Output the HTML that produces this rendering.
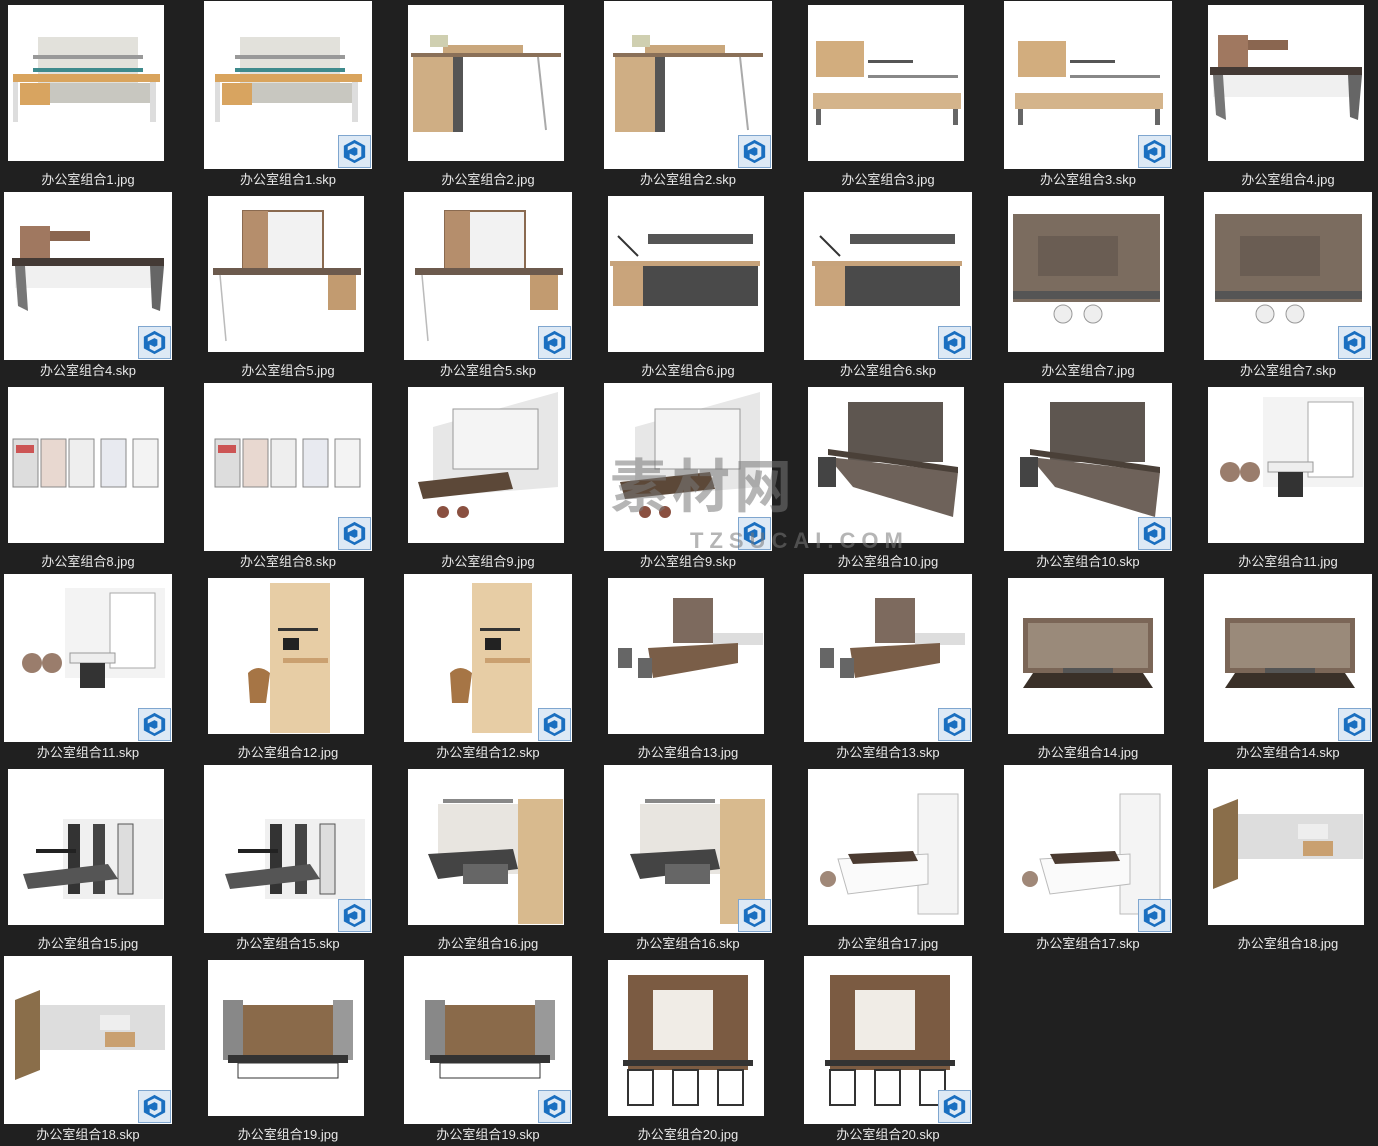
<!DOCTYPE html>
<html><head><meta charset="utf-8">
<style>
html,body{margin:0;padding:0;background:#202020;width:1378px;height:1144px;overflow:hidden}
.it{position:absolute;width:200px;height:191px}
.box{position:absolute;background:#fff;overflow:hidden}
.jpg .box{left:8px;top:5px;width:156px;height:156px}
.skp .box{left:4px;top:1px;width:168px;height:168px}
.box svg{position:absolute;left:0;top:0;width:100%;height:100%}
.ic{position:absolute;left:134px;top:134px;width:33px;height:33px;background:#dde9f5;border:1px solid #7fa6cf;box-sizing:border-box}
.lb{position:absolute;left:0;width:176px;top:169px;text-align:center;color:#e8e8e8;font:13px "Liberation Sans","Noto Sans CJK SC",sans-serif;white-space:nowrap}
.wm{position:absolute;color:rgba(120,120,120,0.55);font-family:"Liberation Sans","Noto Sans CJK SC",sans-serif;font-weight:bold;white-space:nowrap}
</style></head><body>
<div id="g"></div>
<div class="wm" style="left:610px;top:440px;font-size:58px;letter-spacing:4px">素材网</div>
<div class="wm" style="left:690px;top:528px;font-size:22px;letter-spacing:6px">TZSUCAI.COM</div>
<script>
var S={
1:'<rect x="30" y="32" width="100" height="55" fill="#e2e1db"/><rect x="25" y="50" width="110" height="4" fill="#999"/><rect x="25" y="63" width="110" height="4" fill="#3e8a8c"/><rect x="5" y="69" width="147" height="8" fill="#d9a45d"/><rect x="5" y="77" width="5" height="40" fill="#ddd"/><rect x="142" y="77" width="6" height="40" fill="#ddd"/><rect x="12" y="78" width="30" height="22" fill="#d8a460"/><rect x="42" y="78" width="100" height="20" fill="#c8c7c0"/>',
2:'<rect x="35" y="40" width="80" height="8" fill="#c9a77c"/><rect x="3" y="48" width="150" height="4" fill="#8a7058"/><rect x="5" y="52" width="40" height="75" fill="#cfae84"/><rect x="45" y="52" width="10" height="75" fill="#555"/><rect x="22" y="30" width="18" height="12" fill="#cfcfb0"/><line x1="130" y1="52" x2="138" y2="125" stroke="#aaa" stroke-width="2"/>',
3:'<rect x="8" y="36" width="48" height="36" fill="#d2ad7e"/><rect x="60" y="55" width="45" height="3" fill="#555"/><rect x="60" y="70" width="90" height="3" fill="#888"/><rect x="5" y="88" width="148" height="16" fill="#d4b48b"/><rect x="8" y="104" width="5" height="16" fill="#666"/><rect x="145" y="104" width="5" height="16" fill="#666"/>',
4:'<rect x="10" y="30" width="30" height="32" fill="#a07860"/><rect x="40" y="35" width="40" height="10" fill="#8a6650"/><rect x="2" y="62" width="152" height="8" fill="#443a35"/><rect x="5" y="70" width="140" height="22" fill="#f0f0f0"/><polygon points="5,70 15,70 18,115 8,110" fill="#777"/><polygon points="140,70 154,70 150,115 142,112" fill="#666"/>',
5:'<rect x="35" y="15" width="80" height="58" fill="#f2f2f2" stroke="#8a6a50" stroke-width="2"/><rect x="35" y="15" width="25" height="58" fill="#b58e6c"/><rect x="5" y="72" width="148" height="7" fill="#6c5a4d"/><rect x="120" y="79" width="28" height="35" fill="#c29b70"/><line x1="12" y1="79" x2="18" y2="145" stroke="#bbb" stroke-width="1.5"/>',
6:'<rect x="40" y="38" width="105" height="10" fill="#555"/><rect x="2" y="65" width="150" height="5" fill="#c7a37b"/><rect x="35" y="70" width="115" height="40" fill="#4a4a4a"/><rect x="5" y="70" width="30" height="40" fill="#c9a47b"/><line x1="10" y1="40" x2="30" y2="60" stroke="#333" stroke-width="2"/>',
7:'<rect x="5" y="18" width="147" height="88" fill="#7b6c5f"/><rect x="30" y="40" width="80" height="40" fill="#6a5d53"/><rect x="5" y="95" width="147" height="8" fill="#555"/><circle cx="55" cy="118" r="9" fill="#eee" stroke="#999"/><circle cx="85" cy="118" r="9" fill="#eee" stroke="#999"/>',
8:'<rect x="5" y="52" width="25" height="48" fill="#ddd" stroke="#888"/><rect x="33" y="52" width="25" height="48" fill="#e8d8d0" stroke="#888"/><rect x="61" y="52" width="25" height="48" fill="#eee" stroke="#888"/><rect x="93" y="52" width="25" height="48" fill="#e8eaf0" stroke="#888"/><rect x="125" y="52" width="25" height="48" fill="#f3f3f3" stroke="#888"/><rect x="8" y="58" width="18" height="8" fill="#c55"/>',
9:'<polygon points="25,40 150,5 150,100 25,110" fill="#e7e7e7"/><rect x="45" y="22" width="85" height="60" fill="#f4f4f4" stroke="#999"/><polygon points="10,95 100,85 105,102 15,112" fill="#5c4838"/><circle cx="35" cy="125" r="6" fill="#8a5040"/><circle cx="55" cy="125" r="6" fill="#8a5040"/>',
10:'<rect x="40" y="15" width="95" height="60" fill="#5e5650"/><polygon points="20,70 150,85 145,130 45,100" fill="#6e625a"/><polygon points="20,62 150,80 150,86 20,68" fill="#4a4038"/><rect x="10" y="70" width="18" height="30" fill="#444"/>',
11:'<rect x="55" y="10" width="100" height="90" fill="#f3f3f3"/><rect x="100" y="15" width="45" height="75" fill="#fff" stroke="#aaa"/><rect x="60" y="75" width="45" height="10" fill="#eee" stroke="#999"/><rect x="70" y="85" width="25" height="25" fill="#333"/><circle cx="22" cy="85" r="10" fill="#9a7d6c"/><circle cx="42" cy="85" r="10" fill="#9a7d6c"/>',
12:'<rect x="62" y="5" width="60" height="150" fill="#e7cda5"/><rect x="70" y="50" width="40" height="3" fill="#333"/><rect x="75" y="60" width="16" height="12" fill="#222"/><rect x="75" y="80" width="45" height="5" fill="#caa070"/><path d="M40 95 Q50 85 62 95 L58 125 L42 125Z" fill="#a67545"/>',
13:'<rect x="65" y="20" width="40" height="45" fill="#7d6a5e"/><rect x="105" y="55" width="50" height="12" fill="#ddd"/><polygon points="40,70 130,65 130,85 45,100" fill="#7a5e48"/><rect x="10" y="70" width="14" height="20" fill="#666"/><rect x="30" y="80" width="14" height="20" fill="#666"/>',
14:'<rect x="15" y="40" width="130" height="55" fill="#7b6657"/><rect x="20" y="45" width="120" height="45" fill="#9a8a7a"/><polygon points="15,110 145,110 135,95 25,95" fill="#3a3028"/><rect x="55" y="90" width="50" height="5" fill="#555"/>',
15:'<rect x="55" y="50" width="100" height="80" fill="#f0f0f0"/><rect x="60" y="55" width="12" height="70" fill="#333"/><rect x="85" y="55" width="12" height="70" fill="#444"/><rect x="110" y="55" width="15" height="70" fill="#ddd" stroke="#555"/><polygon points="15,105 100,95 110,110 20,120" fill="#555"/><rect x="28" y="80" width="40" height="4" fill="#222"/>',
16:'<rect x="110" y="30" width="45" height="125" fill="#d8ba8e"/><rect x="30" y="35" width="80" height="70" fill="#e8e5e0"/><rect x="35" y="30" width="70" height="4" fill="#888"/><polygon points="20,85 105,80 110,100 30,110" fill="#444"/><rect x="55" y="95" width="45" height="20" fill="#666"/>',
17:'<rect x="110" y="25" width="40" height="120" fill="#f4f4f4" stroke="#bbb"/><polygon points="30,90 120,85 120,115 40,125" fill="#fafafa" stroke="#bbb"/><polygon points="40,85 105,82 110,92 45,95" fill="#4a3a30"/><circle cx="20" cy="110" r="8" fill="#a08878"/>',
18:'<polygon points="5,40 30,30 30,110 5,120" fill="#8a6e4a"/><rect x="30" y="45" width="125" height="45" fill="#ddd"/><rect x="90" y="55" width="30" height="15" fill="#eee"/><rect x="95" y="72" width="30" height="15" fill="#c9a070"/>',
19:'<rect x="15" y="40" width="20" height="60" fill="#888"/><rect x="125" y="40" width="20" height="60" fill="#999"/><rect x="35" y="45" width="90" height="50" fill="#8a6a4a"/><rect x="20" y="95" width="120" height="8" fill="#333"/><rect x="30" y="103" width="100" height="15" fill="#fff" stroke="#333"/>',
20:'<rect x="20" y="15" width="120" height="95" fill="#7b5b42"/><rect x="45" y="30" width="60" height="60" fill="#f0ece6"/><rect x="15" y="100" width="130" height="6" fill="#333"/><rect x="20" y="110" width="25" height="35" fill="none" stroke="#333" stroke-width="2"/><rect x="65" y="110" width="25" height="35" fill="none" stroke="#333" stroke-width="2"/><rect x="110" y="110" width="25" height="35" fill="none" stroke="#333" stroke-width="2"/>'
};
var items=[];for(var n=1;n<=20;n++){items.push([n,'jpg']);items.push([n,'skp']);}
var icon='<svg viewBox="0 0 32 32" width="31" height="31" style="position:absolute;left:0;top:0"><path d="M5 10 L16 4 L27 10 L27 22 L16 28 L5 22Z" fill="#1a6fc0"/><path d="M9 11 L16 7.5 L23 11 L23 21 L16 25 L11 22.5 L11 18 L16 20.5 L19 19 L19 13 L16 11.5 L9 15Z" fill="#dde9f5"/><path d="M14 14 L16 13 L17 13.5 L17 18 L14 16.5Z" fill="#1a6fc0"/></svg>';
var h='';
items.forEach(function(it,i){
var c=i%7,r=Math.floor(i/7),x=c*200,y=r*191;
var vb=it[1]=='jpg'?'0 0 156 156':'-6 -4 168 168';
h+='<div class="it '+it[1]+'" style="left:'+x+'px;top:'+y+'px"><div class="box"><svg viewBox="'+vb+'">'+S[it[0]]+'</svg>'+(it[1]=='skp'?'<div class="ic">'+icon+'</div>':'')+'</div><div class="lb">办公室组合'+it[0]+'.'+it[1]+'</div></div>';
});
document.getElementById('g').innerHTML=h;
</script>
</body></html>
